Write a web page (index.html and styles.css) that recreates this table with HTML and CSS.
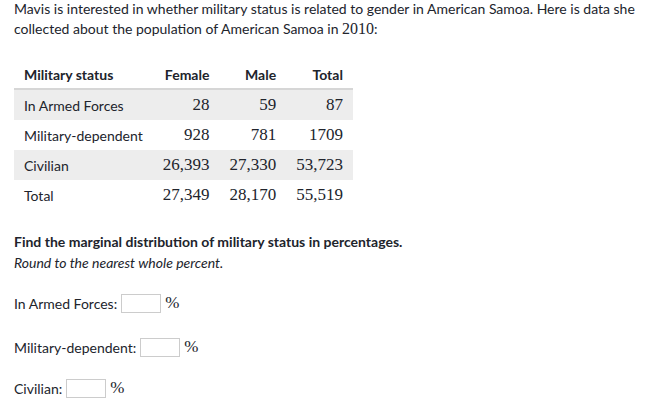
FILE: index.html
```html
<!DOCTYPE html>
<html>
<head>
<meta charset="utf-8">
<link rel="stylesheet" href="styles.css">
</head>
<body>
<div class="page">
  <p class="intro">Mavis is interested in whether military status is related to gender in American Samoa. Here is data she collected about the population of American Samoa in <span class="year">2010</span>:</p>
  <table class="data">
    <thead>
      <tr><th class="label">Military status</th><th>Female</th><th>Male</th><th>Total</th></tr>
    </thead>
    <tbody>
      <tr class="shade"><td class="label">In Armed Forces</td><td class="num">28</td><td class="num">59</td><td class="num">87</td></tr>
      <tr><td class="label">Military-dependent</td><td class="num">928</td><td class="num">781</td><td class="num">1709</td></tr>
      <tr class="shade"><td class="label">Civilian</td><td class="num">26,393</td><td class="num">27,330</td><td class="num">53,723</td></tr>
      <tr><td class="label">Total</td><td class="num">27,349</td><td class="num">28,170</td><td class="num">55,519</td></tr>
    </tbody>
  </table>
  <p class="question">Find the marginal distribution of military status in percentages.</p>
  <p class="hint">Round to the nearest whole percent.</p>
  <div class="answers">
    <div class="answer"><span>In Armed Forces:</span><span class="box"></span><span class="pct">%</span></div>
    <div class="answer"><span>Military-dependent:</span><span class="box"></span><span class="pct">%</span></div>
    <div class="answer last"><span>Civilian:</span><span class="box"></span><span class="pct">%</span></div>
  </div>
</div>
</body>
</html>
```
FILE: styles.css
```css
html, body { margin: 0; padding: 0; background: #fff; }
body { font-family: Lato, "Open Sans", sans-serif; color: #21242c; }
.page { padding: 0 0 0 14px; }
.intro { margin: -1px 0 0; font-size: 14px; line-height: 20px; }
.year { font-family: "Liberation Serif", "DejaVu Serif", serif; font-size: 16px; line-height: 0; }
.num { font-family: "Liberation Serif", "DejaVu Serif", serif; font-size: 17px; }
.data { border-collapse: collapse; margin-top: 21px; font-size: 14px; }
.data th { font-weight: bold; text-align: right; height: 28px; padding: 0 10px; border-bottom: 2px solid #d6d6d6; vertical-align: middle; }
.data td { text-align: right; height: 30px; padding: 0 10px; vertical-align: middle; }
.data th.label, .data td.label { text-align: left; }
.data th.label { padding-right: 20px; }
.data tr.shade td { background: #ededed; }
.question { margin: 22px 0 0; font-size: 14px; font-weight: bold; line-height: 20px; }
.hint { margin: 1px 0 0; font-size: 14px; font-style: italic; line-height: 20px; }
.answers { margin-top: 20px; display: flex; flex-direction: column; gap: 24px; font-size: 14px; }
.answer { display: flex; align-items: center; height: 20px; }
.answer.last { margin-top: -3px; }
.box { display: inline-block; width: 38px; height: 17px; border: 1px solid #ccc; margin-left: 4px; }
.pct { font-family: "Liberation Serif", serif; font-size: 17px; margin-left: 4px; }
```
